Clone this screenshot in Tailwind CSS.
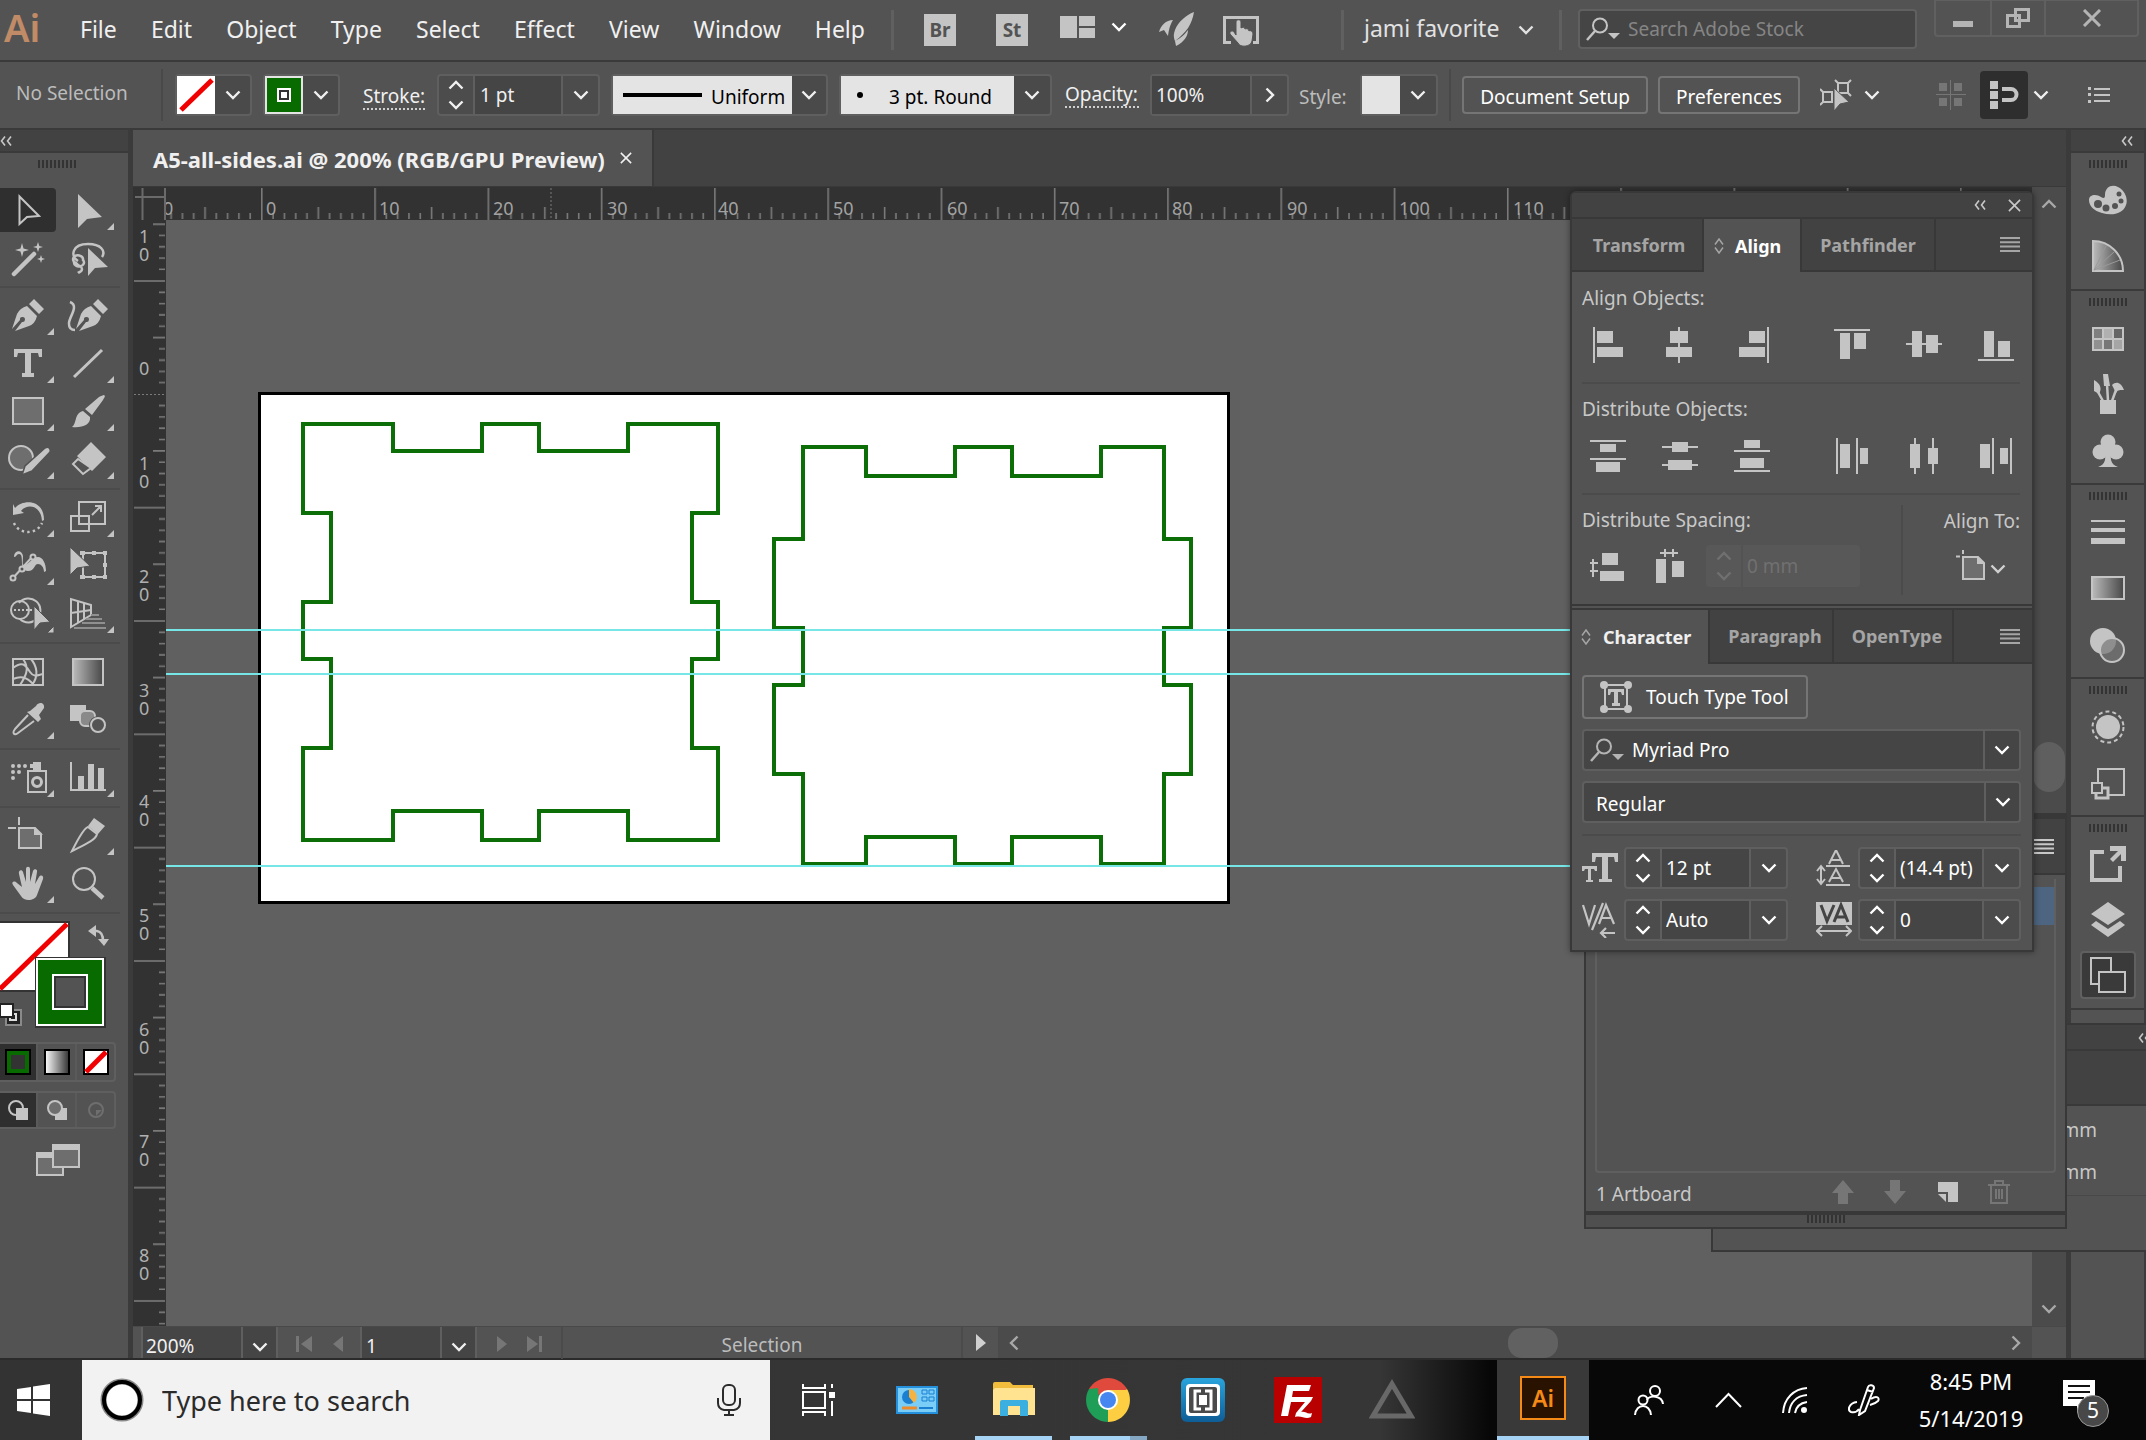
<!DOCTYPE html>
<html lang="en">
<head>
<meta charset="utf-8">
<title>A5-all-sides.ai - Adobe Illustrator</title>
<script src="https://cdn.jsdelivr.net/npm/@tailwindcss/browser@4"></script>
</head>
<body class="h-screen overflow-hidden flex flex-col bg-[#535353] font-['Noto_Sans',sans-serif] text-[19px] leading-6 text-[#c8c8c8]">

<svg class="absolute w-0 h-0" aria-hidden="true">
  <defs>
    <symbol id="chev" viewBox="0 0 16 10"><path d="M1.500 1.500L8 8l6.500-6.500" fill="none" stroke="currentColor" stroke-width="2.400"/></symbol>
    <symbol id="dbl" viewBox="0 0 12 10"><path d="M5 .5L1.500 5 5 9.500M11 .5L7.500 5l3.500 4.500" fill="none" stroke="currentColor" stroke-width="1.600"/></symbol>
    <symbol id="cross" viewBox="0 0 14 14"><path d="M1 1l12 12M13 1L1 13" fill="none" stroke="currentColor" stroke-width="1.800"/></symbol>
    <symbol id="burger" viewBox="0 0 20 15"><path d="M0 1h20M0 5.300h20M0 9.600h20M0 14h20" stroke="currentColor" stroke-width="2"/></symbol>
    <symbol id="grip" viewBox="0 0 38 8"><path d="M1 0v8M5 0v8M9 0v8M13 0v8M17 0v8M21 0v8M25 0v8M29 0v8M33 0v8M37 0v8" stroke="#333" stroke-width="2"/></symbol>
    <symbol id="updown" viewBox="0 0 10 16"><path d="M1 6.500L5 1l4 5.500M1 9.500L5 15l4-5.500" fill="none" stroke="currentColor" stroke-width="1.500"/></symbol>
    <symbol id="lens" viewBox="0 0 34 24"><circle cx="14" cy="8.500" r="7" fill="none" stroke="currentColor" stroke-width="2"/><path d="M9 14L1 23" stroke="currentColor" stroke-width="2.500"/><path d="M22 16h12l-6 6z" fill="currentColor"/></symbol>
    <linearGradient id="gr"><stop offset="0" stop-color="#bbb"/><stop offset="1" stop-color="#474747"/></linearGradient>
    <linearGradient id="wg"><stop offset="0" stop-color="#fff"/><stop offset="1" stop-color="#333"/></linearGradient>
    <linearGradient id="blu" x2="0" y2="1"><stop offset="0" stop-color="#2aa4dc"/><stop offset="1" stop-color="#0e5d96"/></linearGradient>
  </defs>
</svg>

<!-- Menu bar -->
<header class="h-[62px] shrink-0 border-b-2 border-[#3a3a3a] flex items-start pl-1 pr-[7px]">
  <span class="w-[76px] h-[54px] flex items-center text-[38px] font-semibold leading-none text-[#c08b66]">Ai</span>
  <nav aria-label="Main menu" class="w-[785px] h-[58px] flex items-center justify-between text-[23px] text-[#f0f0f0]">
    <a href="#">File</a><a href="#">Edit</a><a href="#">Object</a><a href="#">Type</a><a href="#">Select</a><a href="#">Effect</a><a href="#">View</a><a href="#">Window</a><a href="#">Help</a>
  </nav>
  <i class="ml-[26px] mt-[10px] w-[3px] h-10 bg-[#606060]"></i>
  <button class="ml-[30px] mt-[14px] w-8 h-8 bg-[#c4c4c4] text-[#535353] text-[19px] font-bold leading-8">Br</button>
  <button class="ml-10 mt-[14px] w-8 h-8 bg-[#c4c4c4] text-[#535353] text-[19px] font-bold leading-8">St</button>
  <button aria-label="Arrange documents" class="ml-8 mt-4 flex gap-4 text-white"><svg class="w-[35px] h-[22px]" fill="#c4c4c4"><path d="M0 0h17v22H0zM19 0h16v10H19zM19 12h16v10H19z"/></svg><svg class="w-4 h-[10px] mt-[6px]"><use href="#chev"/></svg></button>
  <button aria-label="GPU performance" class="ml-8 mt-3"><svg class="w-9 h-[34px]" fill="#c4c4c4"><path d="M35 0C33 12 28 20 16 29c-2-5-1-8 0-11C19 10 27 3 35 0zM14 8C7 8 2 13 0 20l5-2 4 6c1-7 2-11 5-16zM29 18c0 6-4 12-12 16l-1-5c6-3 9-6 13-11z"/></svg></button>
  <button aria-label="Touch workspace" class="ml-7 mt-4"><svg class="w-9 h-[31px]"><path d="M8 26.500H1.500v-25h33v25H30" fill="none" stroke="#c4c4c4" stroke-width="3"/><path d="M13 6c0-3 5-3 5 0v6c1-1 4-1 4 1 1-1 4 0 4 2 1-1 4 0 4 3l-1 7c-1 6-12 7-14 2L7 18c-1-3 3-4 4-2l2 3z" fill="#c4c4c4" stroke="#535353"/></svg></button>
  <i class="ml-[82px] mt-[10px] w-[3px] h-10 bg-[#606060]"></i>
  <button class="ml-5 w-[170px] h-[56px] flex items-center justify-between text-[23px] text-[#e2e2e2]">jami favorite<svg class="w-4 h-[10px] mt-1"><use href="#chev"/></svg></button>
  <i class="ml-[25px] mt-[10px] w-[3px] h-10 bg-[#606060]"></i>
  <label class="ml-auto mt-[9px] w-[339px] h-10 flex items-center pl-[6px] gap-2 rounded border-2 border-[#606060] bg-[#454545]"><svg class="w-[34px] h-6 text-[#c4c4c4]"><use href="#lens"/></svg><input aria-label="Search Adobe Stock" placeholder="Search Adobe Stock" class="flex-1 min-w-0 bg-transparent placeholder:text-[#858585]"></label>
  <div class="ml-[17px] w-[205px] h-[38px] -mt-px flex rounded-b border-2 border-[#606060] text-[#b4b4b4]">
    <button aria-label="Minimize" class="w-[56px] border-r-2 border-[#606060] flex items-center justify-center"><svg class="w-5 h-[6px] mt-3"><path d="M0 0h20v6H0z" fill="currentColor"/></svg></button>
    <button aria-label="Restore" class="w-[54px] border-r-2 border-[#606060] flex items-center justify-center"><svg class="w-6 h-5" fill="none" stroke="currentColor" stroke-width="3"><path d="M9.500 1.500h13v11h-13zM1.500 7.500h12v11h-12z"/></svg></button>
    <button aria-label="Close" class="flex-1 flex items-center justify-center"><svg class="w-5 h-[18px]"><path d="M2 1l16 16M18 1L2 17" stroke="currentColor" stroke-width="3"/></svg></button>
  </div>
</header>

<!-- Control bar -->
<section aria-label="Control" class="h-[68px] shrink-0 border-b-2 border-[#3a3a3a] flex items-center pl-4 pr-9 text-[#f0f0f0]">
  <span class="w-[147px] h-[52px] flex items-center pb-1 border-r-2 border-[#494949] text-[#bcbcbc]">No Selection</span>
  <button aria-label="Fill" class="ml-3 w-[77px] h-[42px] flex rounded border-2 border-[#5f5f5f] bg-[#4a4a4a]"><svg class="w-[38px] h-[38px] bg-white"><path d="M4 34L35 4" stroke="#f00000" stroke-width="5"/></svg><svg class="w-4 h-[10px] m-auto"><use href="#chev"/></svg></button>
  <button aria-label="Stroke color" class="ml-[11px] w-[77px] h-[42px] flex rounded border-2 border-[#5f5f5f] bg-[#4a4a4a]"><svg class="w-[38px] h-[38px]"><path fill="#e4e4e4" d="M0 0h38v38H0z"/><path fill="#076b00" d="M2 2h34v34H2z"/><path fill="#fff" d="M12 12h14v14H12z"/><path fill="#333" d="M14 14h10v10H14z"/><path fill="#fff" d="M16 16h6v6h-6z"/></svg><svg class="w-4 h-[10px] m-auto"><use href="#chev"/></svg></button>
  <label for="sw" class="ml-[23px] mt-1 w-[62px] border-b-2 border-dotted border-[#d0d0d0]">Stroke:</label>
  <div class="ml-[12px] w-[163px] h-[42px] flex rounded border-2 border-[#5f5f5f] bg-[#4c4c4c]">
    <button aria-label="Step" class="w-[34px] flex flex-col items-center justify-between py-1"><svg class="w-4 h-[10px] rotate-180"><use href="#chev"/></svg><svg class="w-4 h-[10px]"><use href="#chev"/></svg></button>
    <input id="sw" value="1 pt" class="flex-1 min-w-0 pl-[5px] bg-[#454545] border-x-2 border-[#5f5f5f]">
    <button aria-label="Stroke weights" class="w-[35px] flex"><svg class="w-4 h-[10px] m-auto"><use href="#chev"/></svg></button>
  </div>
  <div class="ml-[11px] w-[217px] h-[42px] flex items-center rounded border-2 border-[#5f5f5f] bg-[#4a4a4a]"><span class="h-full pl-[10px] flex items-center bg-[#e4e4e4]"><i class="w-[79px] h-1 bg-black"></i></span><select aria-label="Width profile" class="appearance-none w-[90px] pl-[9px] pt-1 h-full bg-[#e4e4e4] text-black"><option>Uniform</option></select><svg class="w-4 h-[10px] m-auto"><use href="#chev"/></svg></div>
  <div class="ml-[11px] w-[213px] h-[42px] flex items-center rounded border-2 border-[#5f5f5f] bg-[#4a4a4a]"><span class="w-[48px] h-full pl-4 flex items-center bg-[#e4e4e4]"><i class="w-[6px] h-[6px] rounded-full bg-black"></i></span><select aria-label="Brush" class="appearance-none w-[125px] pt-1 h-full bg-[#e4e4e4] text-black"><option>3 pt. Round</option></select><svg class="w-4 h-[10px] m-auto"><use href="#chev"/></svg></div>
  <label for="op" class="ml-[13px] w-[74px] border-b-2 border-dotted border-[#d0d0d0]">Opacity:</label>
  <div class="ml-[11px] w-[139px] h-[42px] flex rounded border-2 border-[#5f5f5f] bg-[#4c4c4c]"><input id="op" value="100%" class="flex-1 min-w-0 pl-1 bg-[#454545] border-r-2 border-[#5f5f5f]"><button aria-label="Opacity slider" class="w-[35px] flex"><svg class="w-4 h-[10px] m-auto -rotate-90"><use href="#chev"/></svg></button></div>
  <span class="ml-[10px] mt-1 w-[61px] text-[#bcbcbc]">Style:</span>
  <button aria-label="Graphic style" class="w-[78px] h-[42px] flex rounded border-2 border-[#5f5f5f] bg-[#4a4a4a]"><i class="w-[38px] h-full bg-[#e4e4e4]"></i><svg class="w-4 h-[10px] m-auto"><use href="#chev"/></svg></button>
  <i class="ml-[11px] w-[2px] h-[52px] bg-[#494949]"></i>
  <button class="ml-[11px] w-[186px] h-[38px] pt-1 rounded border-2 border-[#757575] text-white">Document Setup</button>
  <button class="ml-[10px] w-[142px] h-[38px] pt-1 rounded border-2 border-[#757575] text-white">Preferences</button>
  <button aria-label="Isolate selected" class="ml-5 flex items-center gap-3"><svg class="w-8 h-8" fill="none" stroke="#c4c4c4" stroke-width="2"><path d="M18 4h10v10H18zM15 1l3 3M31 1l-3 3M31 17l-3-3M3 13h9v10H3zM0 10l3 3M0 26l3-3"/><path d="M14 9v23l6-7 9-2z" fill="#c4c4c4" stroke="#535353" stroke-width="1"/></svg><svg class="w-4 h-[10px]"><use href="#chev"/></svg></button>
  <div class="ml-auto flex items-center">
    <svg class="w-[30px] h-[30px] mr-[14px]" fill="#767676"><path d="M3 3h8v8H3zM18 3h8v8h-8zM3 18h8v8H3zM18 18h8v8h-8zM14 0h1v30h-1zM0 14h30v1H0z"/></svg>
    <button aria-label="Snap to glyph" class="w-12 h-12 rounded bg-[#2e2e2e] flex items-center justify-center"><svg class="w-[30px] h-[30px]"><path d="M1 1h8v8H1zM1 11h8v8H1zM1 21h8v8H1z" fill="#c4c4c4"/><path d="M13 9h9a5.500 5.500 0 0 1 0 11h-9" fill="none" stroke="#c4c4c4" stroke-width="4"/></svg></button>
    <svg class="w-4 h-[10px] ml-[5px] mr-[39px]"><use href="#chev"/></svg>
    <button aria-label="Control menu"><svg class="w-[22px] h-4" fill="#c4c4c4"><path d="M0 0h3v3H0zM0 6h3v3H0zM0 13h3v3H0zM6 1h16v2H6zM6 7h16v2H6zM6 13h16v2H6z"/></svg></button>
  </div>
</section>

<main class="relative flex-1 min-h-0 flex">
  <!-- Tools -->
  <aside aria-label="Tools" class="w-[133px] shrink-0 border-r-[5px] border-[#3b3b3b] flex flex-col">
    <div class="h-[23px] bg-[#424242] border-b-2 border-[#3a3a3a] pt-[6px]"><svg class="w-3 h-[10px]"><use href="#dbl"/></svg></div>
    <svg class="w-[38px] h-2 ml-[38px] mt-[7px] mb-[19px]"><use href="#grip"/></svg>
    <div class="grid grid-cols-[56px_64px] w-[120px] justify-items-center pb-[3px] border-b-2 border-[#4b4b4b]">
      <button aria-label="Selection" class="relative"><i class="absolute inset-x-0 top-[1px] h-11 rounded-r bg-[#2f2f2f]"></i><svg class="relative w-14 h-12" viewBox="-28 -24 56 48"><path d="M-8.500-14.500V13L-1 6l12-1z" fill="none" stroke="#c4c4c4" stroke-width="2"/></svg></button>
      <button aria-label="Direct selection"><svg class="w-14 h-12" viewBox="-28 -24 56 48" fill="#c4c4c4"><path d="M-10-17V17L-1 8 14 6zM26 12v7h-7z"/></svg></button>
      <button aria-label="Magic wand"><svg class="w-14 h-12" viewBox="-28 -24 56 48" fill="#c4c4c4"><path d="M-14 15L6-5" stroke="#c4c4c4" stroke-width="4.500" stroke-linecap="round"/><path d="M-6-16l1.500 5.500L1-9l-5.500 1.500L-6-2l-1.500-5.500L-13-9l5.500-1.500zM10-17l1.300 4L15-12l-3.700 1L10-7l-1.300-4L5-12l3.700-1zM13-4l1 3 3 1-3 1-1 3-1-3-3-1 3-1z"/></svg></button>
      <button aria-label="Lasso"><svg class="w-14 h-12" viewBox="-28 -24 56 48"><path d="M-10 2C-18-3-16-15 0-15c13 0 18 7 14 13M-14 3a5 4 0 1 0 9-2 5 4 0 1 0-7 3c3 4 6 3 6 6s-3 3-4 4" fill="none" stroke="#c4c4c4" stroke-width="2.500"/><path d="M0-11V17L7 9 20 8z" fill="#c4c4c4"/></svg></button>
    </div>
    <div class="grid grid-cols-[56px_64px] w-[120px] justify-items-center pt-1 pb-1 border-b-2 border-[#4b4b4b]">
      <button aria-label="Pen"><svg class="w-14 h-12" viewBox="-28 -24 56 48" fill="#c4c4c4"><path d="M-16 13L-11-2Q-8-8-1-10L9 0Q7 8 1 10L-13 15-6 6A2.500 2.500 0 1 0-8 4zM6-17L16-7 11-2 1-12zM26 12v7h-7z"/></svg></button>
      <button aria-label="Curvature"><svg class="w-14 h-12" viewBox="-28 -24 56 48" fill="#c4c4c4"><path d="M-18-14C-8-10-20 2-19 8c0 5 3 6 6 6" fill="none" stroke="#c4c4c4" stroke-width="2.500"/><path d="M-12 13L-7-2Q-4-8 3-10L13 0Q11 8 5 10L-9 15-2 6A2.500 2.500 0 1 0-4 4zM10-17L20-7 15-2 5-12z"/></svg></button>
      <button aria-label="Type"><svg class="w-14 h-12" viewBox="-28 -24 56 48" fill="#c4c4c4"><path d="M-14-15H14V-7H11L10-11H3V9H6V13H-6V9H-3V-11H-10L-11-7H-14zM26 12v7h-7z"/></svg></button>
      <button aria-label="Line segment"><svg class="w-14 h-12" viewBox="-28 -24 56 48" fill="#c4c4c4"><path d="M-14 13L14-14" stroke="#c4c4c4" stroke-width="3"/><path d="M26 12v7h-7z"/></svg></button>
      <button aria-label="Rectangle"><svg class="w-14 h-12" viewBox="-28 -24 56 48" fill="#c4c4c4"><path d="M-15-14H15V12H-15z" fill="#6e6e6e" stroke="#c4c4c4" stroke-width="2"/><path d="M26 12v7h-7z"/></svg></button>
      <button aria-label="Paintbrush"><svg class="w-14 h-12" viewBox="-28 -24 56 48" fill="#c4c4c4"><path d="M16-17c2 1 0 3-1 5L4 3-3-3 11-15c2-1 4-2 5-2zM-5-1L2 5C3 13-6 16-16 15-11 12-14 1-5-1zM26 12v7h-7z"/></svg></button>
      <button aria-label="Shaper"><svg class="w-14 h-12" viewBox="-28 -24 56 48" fill="#c4c4c4"><circle cx="-7" cy="-2" r="12" fill="#6e6e6e" stroke="#c4c4c4" stroke-width="2"/><path d="M-6 15l3-9L17-12c4-2 6 1 5 4L4 11z" stroke="#535353" stroke-width="1.500"/><path d="M26 12v7h-7z"/></svg></button>
      <button aria-label="Eraser"><svg class="w-14 h-12" viewBox="-28 -24 56 48" fill="#c4c4c4"><path d="M3-18L18-3 4 11-11-4zM26 12v7h-7z"/><path d="M-10-1L3 8-5 14-15 4z" fill="#535353" stroke="#c4c4c4" stroke-width="2"/></svg></button>
    </div>
    <div class="grid grid-cols-[56px_64px] w-[120px] justify-items-center pt-1 pb-1 border-b-2 border-[#4b4b4b]">
      <button aria-label="Rotate"><svg class="w-14 h-12" viewBox="-28 -24 56 48" fill="#c4c4c4"><path d="M-15-14l2 4C-5-19 16-19 16 2l-2 1C13-14-2-14-7-7l3 2-11 2z"/><path d="M-14 5A15 14 0 0 0 14 5" fill="none" stroke="#c4c4c4" stroke-width="2.400" stroke-dasharray="2.400 3.200"/><path d="M26 12v7h-7z"/></svg></button>
      <button aria-label="Scale"><svg class="w-14 h-12" viewBox="-28 -24 56 48" fill="none" stroke="#c4c4c4" stroke-width="2"><path d="M-9-16H17V6H-9zM-17-2H1V13H-17zM4-3L13-12M7-12h6v6"/><path d="M26 12v7h-7z" fill="#c4c4c4" stroke="none"/></svg></button>
      <button aria-label="Width"><svg class="w-14 h-12" viewBox="-28 -24 56 48" fill="#c4c4c4"><path d="M-14-9c0-7 8-8 9-1 0 5-1 9 1 9 5 0 8-8 14-8 5 0 8 7 8 14l-2 1c0-5-3-8-6-8-4 0-3 7-10 7C-10 5-3-12-9-12c-3 0-2 3-5 3z"/><path d="M-15 12L5-10" stroke="#c4c4c4" stroke-width="2"/><g fill="#535353" stroke="#c4c4c4" stroke-width="2"><circle cx="-15" cy="12" r="2.500"/><circle cx="-6" cy="3" r="2.500"/><circle cx="5" cy="-9" r="2.500"/></g><path d="M26 12v7h-7z"/></svg></button>
      <button aria-label="Free transform"><svg class="w-14 h-12" viewBox="-28 -24 56 48" fill="#c4c4c4"><path d="M-5-13H17V11H-5z" fill="none" stroke="#c4c4c4" stroke-width="2"/><path d="M-8-15h5v4h-5zM4-15h4v4H4zM15-15h4v4h-4zM15-3h4v4h-4zM15 9h4v4h-4zM4 9h4v4H4zM-8 9h5v4h-5z"/><path d="M-18-19V9l7-7L2 0z" stroke="#535353"/></svg></button>
      <button aria-label="Shape builder"><svg class="w-14 h-12" viewBox="-28 -24 56 48" fill="none" stroke="#c4c4c4" stroke-width="2"><path d="M-9-11A12 12 0 1 1-8 5"/><circle cx="-8" cy="-4" r="9"/><path d="M-14-4H6" stroke-dasharray="2 2"/><path d="M6-8V16l6-7 10-1zM26 12v7h-7z" fill="#c4c4c4" stroke="#535353" stroke-width="1"/></svg></button>
      <button aria-label="Perspective grid"><svg class="w-14 h-12" viewBox="-28 -24 56 48" fill="none" stroke="#c4c4c4" stroke-width="2"><path d="M-17-15V13L3 1V-9zM-17-1L3-4M-10-13V9M-4-11V5"/><path d="M3 1h8M-2 5H14M-6 9H17M-14 14H18" stroke="#8f8f8f"/><path d="M26 12v7h-7z" fill="#c4c4c4" stroke="none"/></svg></button>
    </div>
    <div class="grid grid-cols-[56px_64px] w-[120px] justify-items-center pt-1 pb-1 border-b-2 border-[#4b4b4b]">
      <button aria-label="Mesh"><svg class="w-14 h-12" viewBox="-28 -24 56 48" fill="none" stroke="#c4c4c4" stroke-width="2"><path d="M-15-13H15V13H-15zM-15-4C-5-12-2-6 2 0s8 3 13 2M-5-13C2-4-2 4-8 13M3-13C9-6 11 4 4 13M-15 7C-8 4-2 4 6 13"/></svg></button>
      <button aria-label="Gradient"><svg class="w-14 h-12" viewBox="-28 -24 56 48"><path d="M-15-13H15V13H-15z" fill="url(#gr)" stroke="#c4c4c4" stroke-width="2"/></svg></button>
      <button aria-label="Eyedropper"><svg class="w-14 h-12" viewBox="-28 -24 56 48" fill="#c4c4c4"><path d="M2-9L8-14c3-5 9-3 8 2L11-5l2 4-3 3L-1-8z"/><path d="M0-5L-13 9c-3 4-1 7 3 4L6 1" fill="none" stroke="#c4c4c4" stroke-width="2"/><path d="M26 12v7h-7z"/></svg></button>
      <button aria-label="Blend"><svg class="w-14 h-12" viewBox="-28 -24 56 48" fill="#c4c4c4"><path d="M-18-15H-2V1H-18z"/><rect x="-8" y="-9" width="15" height="15" rx="5" fill="#8a8a8a" stroke="#c4c4c4" stroke-width="2"/><circle cx="10" cy="5" r="9" fill="#535353"/><circle cx="10" cy="5" r="7" fill="none" stroke="#c4c4c4" stroke-width="2"/></svg></button>
    </div>
    <div class="grid grid-cols-[56px_64px] w-[120px] justify-items-center pt-1 pb-1 border-b-2 border-[#4b4b4b]">
      <button aria-label="Symbol sprayer"><svg class="w-14 h-12" viewBox="-28 -24 56 48" fill="#c4c4c4"><path d="M0-7H18V14H0z" fill="none" stroke="#c4c4c4" stroke-width="2"/><path d="M5-16h8v8H5zM2-14h4v4H2z"/><circle cx="9" cy="4" r="4.500" fill="none" stroke="#c4c4c4" stroke-width="3"/><path d="M-15-12h0M-9-12h0M-3-12h0M-15-6h0M-9-6h0M-15 0h0" stroke="#c4c4c4" stroke-width="4" stroke-linecap="round"/><path d="M26 12v7h-7z"/></svg></button>
      <button aria-label="Column graph"><svg class="w-14 h-12" viewBox="-28 -24 56 48" fill="#c4c4c4"><path d="M-18-16h2V11H18v2H-18zM-10-2h6V11h-6zM0-14H6V11H0zM10-10h6V11h-6zM26 12v7h-7z"/></svg></button>
    </div>
    <div class="grid grid-cols-[56px_64px] w-[120px] justify-items-center pt-1 pb-1 border-b-2 border-[#4b4b4b]">
      <button aria-label="Artboard"><svg class="w-14 h-12" viewBox="-28 -24 56 48"><path d="M-9-8H7l6 6V12H-9z" fill="#6e6e6e" stroke="#c4c4c4" stroke-width="2"/><path d="M6-9l9 8H6z" fill="#c4c4c4"/><path d="M-9-19v8M-20-8h8" stroke="#c4c4c4" stroke-width="2"/></svg></button>
      <button aria-label="Slice"><svg class="w-14 h-12" viewBox="-28 -24 56 48" fill="#c4c4c4"><path d="M6-18L17-10 10-2 0-10z"/><path d="M0-9L9-2C8 4-4 9-16 15-10 3-4-8 0-9z" fill="none" stroke="#c4c4c4" stroke-width="2"/><path d="M26 12v7h-7z"/></svg></button>
      <button aria-label="Hand"><svg class="w-14 h-12" viewBox="-28 -24 56 48" fill="#c4c4c4"><path d="M-15 1c-2-3 1-5 4-2l5 4-3-13c-1-4 3-5 4-2l3 10V-15c0-3 4-3 4 0V-2L5-13c1-3 5-2 4 1L7 0l4-7c2-3 5-1 4 2L9 11C7 17-4 18-7 12z"/><path d="M26 12v7h-7z"/></svg></button>
      <button aria-label="Zoom"><svg class="w-14 h-12" viewBox="-28 -24 56 48" fill="none" stroke="#c4c4c4"><circle cx="-4" cy="-5" r="11" stroke-width="2"/><path d="M4 4L15 14" stroke-width="4.500"/></svg></button>
    </div>
    <button aria-label="Fill and stroke" class="mt-[7px] w-[115px] h-[108px]"><svg class="w-[115px] h-[108px]"><path d="M-2 0H70V71H-2z" fill="#333"/><path d="M-2 2H68V69H-2z" fill="#fff"/><path d="M0 68L67 3" stroke="#f00000" stroke-width="5"/><path d="M35 36h71v71H35z" fill="#333"/><path d="M37 38h66v66H37z" fill="#076b00" stroke="#fff" stroke-width="2"/><path d="M53 54h34v34H53z" fill="#535353" stroke="#fff" stroke-width="2"/><path d="M55 56h30v30H55z" fill="none" stroke="#333" stroke-width="2"/><path d="M90 10h7q6 1 6 10" fill="none" stroke="#c4c4c4" stroke-width="2.500"/><path d="M88 10l8-6v12zM98 18h11l-5 7z" fill="#c4c4c4"/><path d="M6 89h15v15H6z" fill="#222" stroke="#8a8a8a" stroke-width="2"/><path d="M10 93h6v6h-6z" fill="none" stroke="#ddd" stroke-width="2"/><path d="M0 83h13v13H0z" fill="#fff" stroke="#222" stroke-width="2"/></svg></button>
    <div class="mt-[13px] w-[116px] h-10 flex rounded-r border-2 border-l-0 border-[#5f5f5f]">
      <button aria-label="Color" class="w-9 bg-[#2f2f2f] flex items-center justify-center"><svg class="w-[26px] h-[26px]"><path fill="#000" d="M0 0h26v26H0z"/><path fill="#076b00" d="M2 2h22v22H2z"/><path fill="#333" d="M6 6h14v14H6z"/></svg></button>
      <button aria-label="Gradient fill" class="w-[41px] border-x-2 border-[#5a5a5a] flex items-center justify-center"><svg class="w-[26px] h-[26px]"><path fill="url(#wg)" stroke="#000" stroke-width="2" d="M1 1h24v24H1z"/></svg></button>
      <button aria-label="None" class="flex-1 flex items-center justify-center"><svg class="w-[26px] h-[26px]"><path fill="#fff" stroke="#000" stroke-width="2" d="M1 1h24v24H1z"/><path d="M3 23L23 3" stroke="#f00000" stroke-width="5"/></svg></button>
    </div>
    <div class="mt-[9px] w-[116px] h-[38px] flex rounded-r border-2 border-l-0 border-[#5f5f5f]">
      <button aria-label="Draw normal" class="w-9 bg-[#2f2f2f] flex items-center justify-center"><svg class="w-5 h-5"><circle cx="8" cy="8" r="7" fill="none" stroke="#c4c4c4" stroke-width="2"/><path d="M8 8h12v12H8z" fill="#c4c4c4"/></svg></button>
      <button aria-label="Draw behind" class="w-[41px] border-x-2 border-[#5a5a5a] flex items-center justify-center"><svg class="w-5 h-5"><path d="M8 8h12v12H8z" fill="#c4c4c4"/><circle cx="8" cy="8" r="7" fill="#6e6e6e" stroke="#c4c4c4" stroke-width="2"/></svg></button>
      <button aria-label="Draw inside" class="flex-1 flex items-center justify-center"><svg class="w-4 h-4"><circle cx="8" cy="8" r="7" fill="none" stroke="#6e6e6e" stroke-width="2"/><path d="M8 8h6l-6 6z" fill="#6e6e6e"/></svg></button>
    </div>
    <button aria-label="Screen mode" class="ml-9 mt-[15px] w-11"><svg class="w-11 h-8"><path d="M1 9h26v22H1z" fill="#6e6e6e" stroke="#c4c4c4" stroke-width="2"/><path d="M1 8h20v6H1zM17 1h26v6H17z" fill="#c4c4c4"/><path d="M17 3h26v20H17z" fill="#6e6e6e" stroke="#c4c4c4" stroke-width="2"/><path d="M16 0h28v6H16z" fill="#c4c4c4"/></svg></button>
  </aside>

  <!-- Document window -->
  <section aria-label="Document" class="flex-1 min-w-0 flex flex-col">
    <div class="h-[57px] shrink-0 flex bg-[#424242] border-b border-[#393939]">
      <div class="h-full w-[521px] pl-5 flex items-center gap-4 bg-[#535353] border-r-2 border-[#393939] text-[22px] font-bold text-[#f0f0f0] whitespace-nowrap"><a href="#" class="w-[451px] pt-[2px]">A5-all-sides.ai @ 200% (RGB/GPU Preview)</a><button aria-label="Close document"><svg class="w-3 h-3"><use href="#cross"/></svg></button></div>
    </div>
    <div class="flex-1 min-h-0 flex">
      <div class="flex-1 min-w-0 flex flex-col">
        <!-- Horizontal ruler: one pattern tile is ten millimetres -->
        <div class="h-[33px] shrink-0 bg-[#323232]"><svg class="w-full h-full text-[18px]" fill="#a2a2a2">
          <defs><pattern id="rh" x="128" y="0" width="113.270" height="33" patternUnits="userSpaceOnUse"><path d="M.8 1v32" stroke="#7a7a7a" stroke-width="1.600"/><path d="M12.100 26v6M23.400 26v6M34.700 26v6M46 26v6M57.300 20v12M68.600 26v6M79.900 26v6M91.200 26v6M102.500 26v6" stroke="#7a7a7a" stroke-width="1.600"/></pattern></defs>
          <rect x="33" width="100%" height="33" fill="url(#rh)"/><path d="M2 10h30M9.500 1v32M32 1v32" stroke="#6a6a6a" stroke-width="2"/><path d="M418 1v31" stroke="#7a7a7a" stroke-dasharray="2 2"/>
          <svg x="33" width="2000" height="33" class="overflow-hidden"><text x="-3" y="28">0</text></svg>
          <text x="133" y="28">0</text><text x="246" y="28">10</text><text x="360" y="28">20</text><text x="474" y="28">30</text><text x="585" y="28">40</text><text x="700" y="28">50</text><text x="814" y="28">60</text><text x="926" y="28">70</text><text x="1039" y="28">80</text><text x="1154" y="28">90</text><text x="1266" y="28">100</text><text x="1380" y="28">110</text>
        </svg></div>
        <div class="flex-1 min-h-0 flex">
          <div class="w-[33px] shrink-0 bg-[#323232]"><svg class="w-full h-full text-[18px]" fill="#b0b0b0">
            <defs><pattern id="rv" x="0" y="60" width="33" height="113.330" patternUnits="userSpaceOnUse"><path d="M1 1h31" stroke="#7a7a7a" stroke-width="1.600"/><path d="M26 12.300h6M26 23.600h6M26 34.900h6M26 46.200h6M20 57.500h12M26 68.800h6M26 80.100h6M26 91.400h6M26 102.700h6" stroke="#7a7a7a" stroke-width="1.600"/></pattern></defs>
            <rect width="33" height="100%" fill="url(#rv)"/>
            <path d="M0 174.500h33" stroke="#323232" stroke-width="4"/><path d="M1 174.500h31" stroke="#7a7a7a" stroke-dasharray="2 2"/>
            <text x="6" y="23">1<tspan x="6" dy="18">0</tspan></text><text x="6" y="155">0</text><text x="6" y="250">1<tspan x="6" dy="18">0</tspan></text><text x="6" y="363">2<tspan x="6" dy="18">0</tspan></text><text x="6" y="477">3<tspan x="6" dy="18">0</tspan></text><text x="6" y="588">4<tspan x="6" dy="18">0</tspan></text><text x="6" y="702">5<tspan x="6" dy="18">0</tspan></text><text x="6" y="816">6<tspan x="6" dy="18">0</tspan></text><text x="6" y="928">7<tspan x="6" dy="18">0</tspan></text><text x="6" y="1042">8<tspan x="6" dy="18">0</tspan></text>
          </svg></div>
          <div class="flex-1 min-w-0 bg-[#606060]"><svg class="w-full h-full"><g transform="translate(-166 -220)">
            <path d="M259.500 393.500h969v509h-969z" fill="#fff" stroke="#000" stroke-width="3"/>
            <g fill="none" stroke="#0b6e06" stroke-width="4">
              <path d="M303 424H393V451H482V424H539V451H628V424H718V513H692V602H718V659H692V748H718V840H628V811H539V840H482V811H393V840H303V748H331V659H303V602H331V513H303z"/>
              <path d="M803 447H866V476H955V447H1012V476H1101V447H1164V539H1191V628H1164V685H1191V774H1164V864H1101V837H1012V864H955V837H866V864H803V774H774V685H803V628H774V539H803z"/>
            </g>
            <path d="M166 630H2032M166 674H2032M166 866H2032" stroke="#76e7e6" stroke-width="2"/>
          </g></svg></div>
        </div>
      </div>
      <div class="w-[34px] shrink-0 bg-[#4b4b4b] flex flex-col items-center text-[#a8a8a8]">
        <svg class="w-4 h-[10px] mt-3 rotate-180"><use href="#chev"/></svg>
        <i class="mt-[533px] w-8 h-[50px] rounded-full bg-[#5f5f5f]"></i>
        <svg class="w-4 h-[10px] mt-auto mb-3"><use href="#chev"/></svg>
      </div>
    </div>
    <!-- Status bar -->
    <div class="h-8 shrink-0 border-t border-[#494949] flex text-[#f0f0f0]">
      <label class="ml-2 w-[137px] h-full flex bg-[#454545] border-x-2 border-[#5f5f5f]"><input aria-label="Zoom level" value="200%" class="w-[100px] pl-[3px] pt-[6px] bg-transparent border-r-2 border-[#5f5f5f]"><svg class="w-4 h-[10px] mt-[15px] mx-auto"><use href="#chev"/></svg></label>
      <svg class="w-[82px] h-8 text-[#767676]" fill="currentColor"><path d="M18 9h3v16h-3zM34 9v16l-11-8zM65 9v16l-10-8z"/></svg>
      <label class="w-[117px] h-full flex bg-[#454545] border-x-2 border-[#5f5f5f]"><input aria-label="Artboard number" value="1" class="w-[80px] pl-1 pt-[6px] bg-transparent border-r-2 border-[#5f5f5f]"><svg class="w-4 h-[10px] mt-[15px] mx-auto"><use href="#chev"/></svg></label>
      <svg class="w-[86px] h-8 text-[#767676]" fill="currentColor"><path d="M20 9v16l10-8zM50 9v16l11-8zM62 9h3v16h-3z"/><path fill="#4b4b4b" d="M84 0h2v32h-2z"/></svg>
      <span class="w-[400px] pt-[6px] text-center border-r-2 border-[#4b4b4b] text-[#bcbcbc]">Selection</span>
      <button aria-label="Status menu" class="w-[35px] flex justify-center"><svg class="w-[10px] h-[18px] mt-[7px]"><path d="M0 0v17l10-8z" fill="#d0d0d0"/></svg></button>
      <div class="flex-1 flex items-center justify-between bg-[#4b4b4b] px-2 text-[#a8a8a8]"><svg class="w-4 h-[10px] rotate-90"><use href="#chev"/></svg><i class="ml-[486px] w-[50px] h-[30px] rounded-[14px] bg-[#616161]"></i><svg class="w-4 h-[10px] ml-auto -rotate-90"><use href="#chev"/></svg></div>
      <i class="w-[34px]"></i>
    </div>
  </section>

  <!-- Collapsed panel dock -->
  <aside aria-label="Panels" class="w-20 shrink-0 border-l-[5px] border-r-2 border-[#3b3b3b] flex flex-col items-center">
    <div class="w-full h-[23px] bg-[#424242] border-b-2 border-[#3a3a3a] flex justify-end pt-[6px] pr-[11px]"><svg class="w-3 h-[10px]"><use href="#dbl"/></svg></div>
    <div class="w-full h-[138px] flex flex-col items-center pt-[7px] border-b-2 border-[#3a3a3a]"><svg class="w-[38px] h-2"><use href="#grip"/></svg>
      <button aria-label="Color"><svg class="w-10 h-[30px] mt-[17px]"><path d="M17 10C17 2 24-1 30 2c8 4 10 13 8 18-3 9-14 11-24 8C6 26 1 21 1 15 1 9 9 9 13 12c3 2 4 1 4-2z" fill="#c4c4c4"/><g fill="#535353"><circle cx="10" cy="19" r="4"/><circle cx="18" cy="23" r="3.500"/><circle cx="27" cy="21" r="3"/><circle cx="33" cy="16" r="2.500"/><circle cx="31" cy="9" r="2.500"/></g></svg></button>
      <button aria-label="Color guide"><svg class="w-8 h-8 mt-[25px]"><path d="M1 1A30 30 0 0 1 31 31H1z" fill="url(#gr)" stroke="#c4c4c4" stroke-width="2"/><path d="M2 30L14 6M2 30L22 12M2 30L28 20" stroke="#999"/></svg></button></div>
    <div class="w-full h-[194px] flex flex-col items-center pt-[7px] border-b-2 border-[#3a3a3a]"><svg class="w-[38px] h-2"><use href="#grip"/></svg>
      <button aria-label="Swatches"><svg class="w-8 h-6 mt-[21px]"><path fill="#c4c4c4" d="M0 0h32v24H0z"/><path fill="#7f7f7f" d="M2 2h8v9H2z"/><path fill="#b0b0b0" d="M12 2h8v9h-8z"/><path fill="#666" d="M22 2h8v9h-8z"/><path fill="#909090" d="M2 13h8v9H2z"/><path fill="#777" d="M12 13h8v9h-8z"/><path fill="#a5a5a5" d="M22 13h8v9h-8z"/></svg></button>
      <button aria-label="Brushes"><svg class="w-8 h-10 mt-[23px]" fill="#c4c4c4"><path d="M8 26h16v14H8zM11 0h5l2 12h-6zM2 6c7 4 8 9 5 14L2 17zM20 11c4-4 9-3 12 5-6 0-6 0-8 3z"/><path d="M6 18l5 9M15 10l1 17M24 16l-4 11" stroke="#c4c4c4" stroke-width="2.500"/></svg></button>
      <button aria-label="Symbols"><svg class="w-8 h-[34px] mt-5" fill="#c4c4c4"><circle cx="16" cy="8" r="7.500"/><circle cx="8" cy="18" r="7.500"/><circle cx="24" cy="18" r="7.500"/><path d="M14 12h4l1 14c1 4 4 6 7 7H6c3-1 6-3 7-7z"/></svg></button></div>
    <div class="w-full h-[194px] flex flex-col items-center pt-[7px] border-b-2 border-[#3a3a3a]"><svg class="w-[38px] h-2"><use href="#grip"/></svg>
      <button aria-label="Stroke"><svg class="w-[34px] h-[25px] mt-[20px]" fill="#c4c4c4"><path d="M0 0h34v2H0zM0 8h34v4H0zM0 18h34v6H0z"/></svg></button>
      <button aria-label="Gradient"><svg class="w-[34px] h-6 mt-[31px]"><path d="M1 1h32v22H1z" fill="url(#gr)" stroke="#c4c4c4" stroke-width="2"/></svg></button>
      <button aria-label="Transparency"><svg class="w-9 h-9 mt-7"><circle cx="13" cy="13" r="13" fill="#c4c4c4"/><circle cx="22" cy="22" r="12" fill="#777" fill-opacity=".7" stroke="#c4c4c4" stroke-width="2"/></svg></button></div>
    <div class="w-full h-[138px] flex flex-col items-center pt-[7px] border-b-2 border-[#3a3a3a]"><svg class="w-[38px] h-2"><use href="#grip"/></svg>
      <button aria-label="Appearance"><svg class="w-[34px] h-[34px] mt-[16px]"><circle cx="17" cy="17" r="12" fill="#c4c4c4"/><circle cx="17" cy="17" r="15.500" fill="none" stroke="#c4c4c4" stroke-width="2" stroke-dasharray="4 3"/></svg></button>
      <button aria-label="Graphic styles"><svg class="w-[34px] h-8 mt-6" fill="none" stroke="#c4c4c4" stroke-width="2"><path d="M7 14V1h26v26H17"/><path d="M5 20h12v10H5z" stroke-width="3"/><path d="M1 15h10v10H1z" fill="#535353"/></svg></button></div>
    <div class="w-full h-[193px] flex flex-col items-center pt-[7px] border-b-2 border-[#3a3a3a]"><svg class="w-[38px] h-2"><use href="#grip"/></svg>
      <button aria-label="Asset export"><svg class="w-9 h-9 mt-[14px]"><path d="M14 6H2v28h28V20" fill="none" stroke="#c4c4c4" stroke-width="4"/><path d="M20 0h16v15h-5V8L23 16l-3-3 8-8h-8z" fill="#c4c4c4"/></svg></button>
      <button aria-label="Layers"><svg class="w-[34px] h-9 mt-5" fill="#c4c4c4"><path d="M17 0L34 12 17 23 0 12zM5 19l12 8 12-8 5 4-17 12L0 23z"/></svg></button>
      <button aria-label="Artboards" class="mt-[13px] w-[56px] h-12 rounded border-2 border-[#606060] bg-[#3a3a3a] flex items-center justify-center"><svg class="w-9 h-9" fill="none" stroke="#c4c4c4" stroke-width="2"><path d="M9 27H1V1h20v13M9 15h26v20H9z"/></svg></button></div>
  </aside>

  <!-- Properties panel, reaching past the window edge -->
  <section aria-label="Properties" class="absolute right-0 top-[893px] w-[435px] h-[229px] bg-[#535353] border-l-2 border-y-2 border-[#383838] flex flex-col items-end">
    <div class="w-full h-[26px] bg-[#424242] border-b-2 border-[#393939] flex justify-end pt-2"><svg class="w-3 h-[10px] -mr-1"><use href="#dbl"/></svg></div>
    <div class="w-full h-[55px] bg-[#424242] border-b-2 border-[#393939]"></div>
    <span class="mt-3 mr-[49px]">mm</span>
    <span class="mt-[18px] mr-[49px]">mm</span>
    <i class="w-full mt-[11px] h-px bg-[#484848]"></i>
  </section>

  <!-- Artboards panel -->
  <section aria-label="Artboards" class="absolute right-[79px] top-[683px] w-[483px] h-[416px] bg-[#535353] border-2 border-[#383838] flex flex-col">
    <div class="h-[60px] shrink-0 bg-[#424242] border-t-4 border-b-2 border-[#383838] flex items-center justify-end pr-[11px]"><svg class="w-5 h-[15px]"><use href="#burger"/></svg></div>
    <div class="mx-[9px] mt-1 h-[294px] shrink-0 border-2 border-t-0 border-[#5f5f5f] rounded-b pt-2"><div class="h-[38px] bg-[#4d6580]"></div></div>
    <div class="h-[38px] shrink-0 flex items-center pl-[10px] pr-[55px]">
      <span class="mt-1 mr-auto">1 Artboard</span>
      <button aria-label="Move up"><svg class="w-[22px] h-6" fill="#767676"><path d="M11 0l11 13h-6v11H6V13H0z"/></svg></button>
      <button aria-label="Move down" class="ml-[30px]"><svg class="w-[22px] h-6" fill="#767676"><path d="M11 24l11-13h-6V0H6v11H0z"/></svg></button>
      <button aria-label="New artboard" class="ml-8"><svg class="w-5 h-5" fill="#c4c4c4"><path d="M0 0h20v20H10V10H0zM0 12h8v8z"/></svg></button>
      <button aria-label="Delete artboard" class="ml-[30px]"><svg class="w-[22px] h-6" fill="none" stroke="#767676" stroke-width="2"><path d="M0 5h22M3 5v18h16V5M7 4V1h8v3M8 9v10M11 9v10M14 9v10"/></svg></button>
    </div>
    <div class="flex-1 bg-[#4f4f4f] border-t-4 border-[#383838] flex justify-center"><svg class="w-[38px] h-2"><use href="#grip"/></svg></div>
  </section>

  <!-- Align and Character panels -->
  <div class="absolute right-[112px] top-[61px] w-[464px] rounded-t-md bg-[#535353] border-2 border-[#383838] flex flex-col shadow-[0_0_6px_#00000066]">
    <section aria-label="Align">
      <div class="h-[26px] rounded-t bg-[#424242] border-b-2 border-[#383838] flex items-center justify-end gap-[22px] pr-[11px]"><svg class="w-3 h-[10px]"><use href="#dbl"/></svg><svg class="w-[13px] h-[13px]"><use href="#cross"/></svg></div>
      <div role="tablist" class="h-[53px] flex bg-[#424242] text-[18px] font-bold text-[#a5a5a5]">
        <button role="tab" class="w-[132px] pl-1 border-r-2 border-b-2 border-[#383838]">Transform</button>
        <button role="tab" class="w-[96px] flex items-center pl-[10px] gap-[11px] bg-[#535353] text-white"><svg class="w-[10px] h-4 text-[#a5a5a5]"><use href="#updown"/></svg>Align</button>
        <button role="tab" class="w-[136px] border-x-2 border-b-2 border-[#383838]">Pathfinder</button>
        <button aria-label="Panel menu" class="flex-1 border-b-2 border-[#383838] flex items-center justify-end pr-3"><svg class="w-5 h-[15px]"><use href="#burger"/></svg></button>
      </div>
      <div class="pl-[10px] pr-3 pt-[14px]">
        <h2>Align Objects:</h2>
        <div class="mt-[17px] pl-2 flex gap-9 text-[#c4c4c4]">
          <button aria-label="Align left"><svg class="w-9 h-9" fill="currentColor"><path d="M3 0h2v36H3zM7 4h16v12H7zM7 20h26v10H7z"/></svg></button>
          <button aria-label="Align center"><svg class="w-9 h-9" fill="currentColor"><path d="M16 0h2v36h-2zM8 4h18v12H8zM4 20h26v10H4z"/></svg></button>
          <button aria-label="Align right" class="mr-7"><svg class="w-9 h-9" fill="currentColor"><path d="M33 0h2v36h-2zM15 4h16v12H15zM5 20h26v10H5z"/></svg></button>
          <button aria-label="Align top"><svg class="w-9 h-9" fill="currentColor"><path d="M0 2h36v2H0zM6 6h10v26H6zM20 6h12v16H20z"/></svg></button>
          <button aria-label="Align middle"><svg class="w-9 h-9" fill="currentColor"><path d="M0 16h36v2H0zM6 4h10v26H6zM20 8h12v18H20z"/></svg></button>
          <button aria-label="Align bottom"><svg class="w-9 h-9" fill="currentColor"><path d="M0 32h36v2H0zM6 4h10v26H6zM20 14h12v16H20z"/></svg></button>
        </div>
        <div class="mt-[19px] pt-[13px] border-t-2 border-[#4b4b4b]"><h2>Distribute Objects:</h2></div>
        <div class="mt-[17px] pl-2 flex gap-9 text-[#c4c4c4]">
          <button aria-label="Distribute top"><svg class="w-9 h-9" fill="currentColor"><path d="M0 2h36v2H0zM10 6h16v8H10zM0 20h36v2H0zM6 24h24v10H6z"/></svg></button>
          <button aria-label="Distribute vertical center"><svg class="w-9 h-9" fill="currentColor"><path d="M0 8h36v2H0zM10 4h16v10H10zM0 26h36v2H0zM6 22h24v10H6z"/></svg></button>
          <button aria-label="Distribute bottom" class="mr-7"><svg class="w-9 h-9" fill="currentColor"><path d="M10 2h16v8H10zM0 12h36v2H0zM6 20h24v10H6zM0 32h36v2H0z"/></svg></button>
          <button aria-label="Distribute left"><svg class="w-9 h-9" fill="currentColor"><path d="M2 0h2v36H2zM6 6h10v24H6zM22 0h2v36h-2zM26 10h8v16h-8z"/></svg></button>
          <button aria-label="Distribute horizontal center"><svg class="w-9 h-9" fill="currentColor"><path d="M8 0h2v36H8zM4 6h10v24H4zM26 0h2v36h-2zM22 10h10v16H22z"/></svg></button>
          <button aria-label="Distribute right"><svg class="w-9 h-9" fill="currentColor"><path d="M2 6h10v24H2zM14 0h2v36h-2zM22 10h8v16h-8zM32 0h2v36h-2z"/></svg></button>
        </div>
        <div class="mt-[19px] pt-[10px] pb-[9px] h-[111px] border-t-2 border-[#4b4b4b] flex">
          <div class="w-[321px] border-r-2 border-[#4b4b4b]"><h2 class="pt-[3px]">Distribute Spacing:</h2>
            <div class="mt-[13px] pl-2 flex items-start text-[#c4c4c4]">
              <button aria-label="Vertical distribute space" class="mt-1"><svg class="w-9 h-9" fill="currentColor"><path d="M12 4h16v12H12zM10 22h24v10H10zM2 10h2v18H2zM0 13h8v2H0zM0 21h8v2H0z"/></svg></button>
              <button aria-label="Horizontal distribute space" class="mt-1 ml-[30px]"><svg class="w-9 h-9" fill="currentColor"><path d="M0 10h10v24H0zM16 12h12v16H16zM4 3h18v2H4zM8 0h2v8H8zM16 0h2v8h-2z"/></svg></button>
              <div class="ml-[14px] w-[154px] h-[42px] flex bg-[#585858] text-[#707070] rounded"><span class="w-[37px] flex flex-col items-center justify-between py-[6px] border-r-2 border-[#535353]"><svg class="w-4 h-[10px] rotate-180"><use href="#chev"/></svg><svg class="w-4 h-[10px]"><use href="#chev"/></svg></span><input aria-label="Spacing" disabled value="0 mm" class="w-[110px] pl-1 bg-transparent"></div>
            </div></div>
          <div class="flex-1 flex flex-col items-end"><span class="pt-1">Align To:</span><button aria-label="Align to artboard" class="mt-[17px] mr-[14px] flex items-center gap-1 text-[#d0d0d0]"><svg class="w-[30px] h-[30px]"><path d="M7 7h15l6 6v16H7z" fill="#6e6e6e" stroke="#c4c4c4" stroke-width="2"/><path d="M21 6l8 8h-8z" fill="#c4c4c4"/><path d="M7 0v4M0 6.500h4" stroke="#c4c4c4" stroke-width="2"/></svg><svg class="w-4 h-[10px] mt-2"><use href="#chev"/></svg></button></div>
        </div>
      </div>
    </section>
    <section aria-label="Character" class="border-t-[6px] border-double border-[#383838]">
      <div role="tablist" class="h-[54px] flex bg-[#424242] text-[18px] font-bold text-[#a5a5a5]">
        <button role="tab" class="w-[136px] flex items-center pl-[9px] gap-[12px] bg-[#535353] text-[#f0f0f0]"><svg class="w-[10px] h-4 text-[#a5a5a5]"><use href="#updown"/></svg>Character</button>
        <button role="tab" class="w-[126px] pl-2 border-x-2 border-b-2 border-[#383838]">Paragraph</button>
        <button role="tab" class="w-[120px] pl-2 border-r-2 border-b-2 border-[#383838]">OpenType</button>
        <button aria-label="Panel menu" class="flex-1 border-b-2 border-[#383838] flex items-center justify-end pr-3"><svg class="w-5 h-[15px]"><use href="#burger"/></svg></button>
      </div>
      <div class="pl-[10px] pr-[11px] pt-[11px] pb-[9px] text-white">
        <button class="w-[226px] h-[44px] flex items-center gap-[14px] pl-4 rounded border-2 border-[#757575]"><svg class="w-8 h-8"><path d="M5 4h22v24H5z" fill="none" stroke="#c4c4c4" stroke-width="2"/><g fill="#c4c4c4"><circle cx="4" cy="4" r="4"/><circle cx="28" cy="4" r="4"/><circle cx="4" cy="28" r="4"/><circle cx="28" cy="28" r="4"/><path d="M8 8h16v6h-2l-1-3h-3v11h2v3h-8v-3h2V11h-3l-1 3H8z"/></g></svg>Touch Type Tool</button>
        <div class="mt-[10px] h-[42px] flex rounded border-2 border-[#5f5f5f] bg-[#454545]"><label class="w-[401px] flex items-center gap-[8px] pl-[6px] border-r-2 border-[#5f5f5f]"><svg class="w-[34px] h-6 text-[#b4b4b4]"><use href="#lens"/></svg><input aria-label="Font family" value="Myriad Pro" class="flex-1 min-w-0 bg-transparent"></label><button aria-label="Font list" class="flex-1 flex"><svg class="w-4 h-[10px] m-auto"><use href="#chev"/></svg></button></div>
        <div class="mt-[10px] h-[42px] flex rounded border-2 border-[#5f5f5f] bg-[#454545]"><select aria-label="Font style" class="appearance-none w-[402px] pl-3 pt-1 bg-transparent border-r-2 border-[#5f5f5f]"><option>Regular</option></select><svg class="w-4 h-[10px] m-auto"><use href="#chev"/></svg></div>
        <div class="mt-[11px] pt-[11px] border-t-2 border-[#4b4b4b] grid grid-cols-[42px_164px_28px_42px_163px] gap-y-[10px] items-center">
          <svg class="w-9 h-[30px]" fill="#c4c4c4"><path d="M10 0h26v9h-3l-1-5h-6v22h4v3H17v-3h3V4h-6l-1 5h-3zM0 13h15v5h-2l-1-2H9v11h2v2H4v-2h2V16H3l-1 2H0z"/></svg>
          <div class="h-[42px] flex rounded border-2 border-[#5f5f5f] bg-[#4c4c4c]"><button aria-label="Step size" class="w-[34px] flex flex-col items-center justify-between py-1"><svg class="w-4 h-[10px] rotate-180"><use href="#chev"/></svg><svg class="w-4 h-[10px]"><use href="#chev"/></svg></button><input aria-label="Font size" value="12 pt" class="flex-1 min-w-0 pl-1 bg-[#454545] border-x-2 border-[#5f5f5f]"><button aria-label="Sizes" class="w-[35px] flex"><svg class="w-4 h-[10px] m-auto"><use href="#chev"/></svg></button></div>
          <i></i>
          <svg class="w-[34px] h-9" fill="none" stroke="#c4c4c4" stroke-width="2"><path d="M13 14l7-14 7 14M15 10h10M10 16h24M13 32l7-13 7 13M15 28h10M10 35h24M5 17v16M1 21l4-5 4 5M1 29l4 5 4-5"/></svg>
          <div class="h-[42px] flex rounded border-2 border-[#5f5f5f] bg-[#4c4c4c]"><button aria-label="Step leading" class="w-[34px] flex flex-col items-center justify-between py-1"><svg class="w-4 h-[10px] rotate-180"><use href="#chev"/></svg><svg class="w-4 h-[10px]"><use href="#chev"/></svg></button><input aria-label="Leading" value="(14.4 pt)" class="flex-1 min-w-0 pl-1 bg-[#454545] border-x-2 border-[#5f5f5f]"><button aria-label="Leadings" class="w-[35px] flex"><svg class="w-4 h-[10px] m-auto"><use href="#chev"/></svg></button></div>
          <svg class="w-[34px] h-9" fill="none" stroke="#c4c4c4" stroke-width="2.200"><path d="M1 3l6 19 6-19M21 1L10 28M17 22l7-19 8 19M20 16h10M19 31h14M24 26l-5 5 5 5"/></svg>
          <div class="h-[42px] flex rounded border-2 border-[#5f5f5f] bg-[#4c4c4c]"><button aria-label="Step kerning" class="w-[34px] flex flex-col items-center justify-between py-1"><svg class="w-4 h-[10px] rotate-180"><use href="#chev"/></svg><svg class="w-4 h-[10px]"><use href="#chev"/></svg></button><input aria-label="Kerning" value="Auto" class="flex-1 min-w-0 pl-1 bg-[#454545] border-x-2 border-[#5f5f5f]"><button aria-label="Kernings" class="w-[35px] flex"><svg class="w-4 h-[10px] m-auto"><use href="#chev"/></svg></button></div>
          <i></i>
          <svg class="w-9 h-9"><path d="M0 0h36v23H0z" fill="#c4c4c4"/><path d="M5 3l6 16 7-16M18 20l7-17 7 17M21 15h8" fill="none" stroke="#444" stroke-width="3"/><path d="M1 29h34M6 24l-5 5 5 5M30 24l5 5-5 5" fill="none" stroke="#c4c4c4" stroke-width="2"/></svg>
          <div class="h-[42px] flex rounded border-2 border-[#5f5f5f] bg-[#4c4c4c]"><button aria-label="Step tracking" class="w-[34px] flex flex-col items-center justify-between py-1"><svg class="w-4 h-[10px] rotate-180"><use href="#chev"/></svg><svg class="w-4 h-[10px]"><use href="#chev"/></svg></button><input aria-label="Tracking" value="0" class="flex-1 min-w-0 pl-1 bg-[#454545] border-x-2 border-[#5f5f5f]"><button aria-label="Trackings" class="w-[35px] flex"><svg class="w-4 h-[10px] m-auto"><use href="#chev"/></svg></button></div>
        </div>
      </div>
    </section>
  </div>
</main>

<!-- Windows taskbar -->
<footer class="h-[82px] shrink-0 border-t-2 border-[#2b2b2b] flex bg-[linear-gradient(to_right,#333_0,#363636_1380px,#070707_1490px)] text-white">
  <button aria-label="Start" class="w-[82px] flex items-center pl-[17px]"><svg class="w-[34px] h-8" fill="#fff"><path d="M0 5l14-2v12H0zM16 2.500L33 0v15H16zM0 17h14v12L0 27zM16 17h17v15l-17-2.500z"/></svg></button>
  <label class="w-[688px] flex items-center bg-[#f2f2f2] pl-[18px] pr-[29px] text-[27px] text-[#2b2b2b]"><svg class="w-11 h-11"><circle cx="22" cy="22" r="18.500" fill="#fff" stroke="#888" stroke-width="6"/><circle cx="22" cy="22" r="18" fill="none" stroke="#000" stroke-width="4"/></svg><input aria-label="Type here to search" placeholder="Type here to search" class="ml-[18px] flex-1 min-w-0 bg-transparent placeholder:text-[#2b2b2b]"><svg class="w-6 h-8" fill="none" stroke="#2b2b2b" stroke-width="2"><rect x="6" y="1" width="12" height="20" rx="5"/><path d="M1 14v5q0 6 6 7h10q6-1 6-7v-5M12 26v5M7 31h10"/></svg></label>
  <button aria-label="Task view" class="w-[98px] flex items-center justify-center"><svg class="w-[34px] h-8" fill="none" stroke="#fff" stroke-width="2"><path d="M1 0v4h22V0M1 8h22v16H1zM1 32v-4h22v4M30 0v4M30 17v15"/><path d="M27 8h6v6h-6z" fill="#fff" stroke="none"/></svg></button>
  <button aria-label="Control Panel" class="w-[98px] flex items-center justify-center"><svg class="w-[42px] h-7"><path fill="#2590dc" d="M0 0h42v28H0z"/><path fill="#79cdf7" d="M2 2h38v24H2z"/><circle cx="13" cy="11" r="7" fill="#1a7fd0"/><path d="M13 11V3a8 8 0 0 1 5 14z" fill="#f4b342"/><path d="M26 4h5v4h-5zM33 4h5v4h-5zM26 11h5v4h-5zM33 11h5v4h-5z" fill="none" stroke="#1a7fd0"/><path d="M6 22h15" stroke="#ee8a2a" stroke-width="3"/><path d="M23 22h14" stroke="#1a7fd0" stroke-width="2"/></svg></button>
  <button aria-label="File Explorer" class="relative w-[95px] flex items-center justify-center"><svg class="w-[42px] h-[36px]"><path d="M0 2q0-2 2-2h15l3 3h20v30H0z" fill="#f2bd3d"/><path d="M2 6h40v27H0V8z" fill="#ffe391"/><path d="M7 34V20q0-2 2-2h24q2 0 2 2v14h-8V24H15v10z" fill="#3aafe0"/></svg><i class="absolute inset-x-[9px] bottom-0 h-1 bg-[#a5d3f5]"></i></button>
  <button aria-label="Chrome" class="relative w-[94px] flex items-center justify-center"><svg class="w-11 h-11" viewBox="-22 -22 44 44"><path d="M0 0L-19-11A22 22 0 0 1 19-11z" fill="#e04a3c"/><path d="M0 0L19-11A22 22 0 0 1 0 22z" fill="#fdce42"/><path d="M0 0V22A22 22 0 0 1-19-11z" fill="#1e9e57"/><path d="M0-10H19.500L17 0H0zM0-10" fill="#fdce42"/><path d="M-9 5L-19-11-10-12z" fill="#1e9e57"/><circle r="10" fill="#fff"/><circle r="8" fill="#4686f0"/></svg><i class="absolute left-[9px] w-[60px] bottom-0 h-1 bg-[#a5d3f5]"></i><i class="absolute left-[69px] w-[17px] bottom-0 h-1 bg-[#84a8c3]"></i></button>
  <button aria-label="Brackets" class="w-[95px] flex items-center justify-center"><svg class="w-11 h-11"><rect width="44" height="44" rx="6" fill="url(#blu)"/><rect x="5" y="6" width="34" height="32" rx="4" fill="#fff"/><rect x="8" y="9" width="28" height="26" rx="2" fill="#4a4a4a"/><path d="M20 13h-6v18h6M24 13h6v18h-6" fill="none" stroke="#fff" stroke-width="3"/><path d="M18 17h8v10h-8z" fill="#fff"/></svg></button>
  <button aria-label="FileZilla" class="w-[95px] flex items-center justify-center"><svg class="w-12 h-[46px]"><path fill="#b90000" d="M0 0h48v46H0z"/><path d="M13 8h24l-2 6H19l-1 6h10l-1 5H17l-3 14H7zM24 20h15l-2 4-10 11c5-1 6 3 11 1l-1 4c-6 3-9-2-16 0l1-4 9-11h-8z" fill="#fff"/></svg></button>
  <button aria-label="Inkscape" class="w-[94px] flex items-center justify-center"><svg class="w-[46px] h-[42px]"><path d="M23 5L42 37H4z" fill="none" stroke="#686868" stroke-width="5"/></svg></button>
  <button aria-label="Adobe Illustrator" class="relative ml-[58px] w-[92px] flex items-center justify-center bg-[#393939]"><span class="w-[46px] h-11 mb-1 flex items-center justify-center border-2 border-[#f58a16] bg-[#2a1200] text-[23px] font-semibold text-[#f58a16]">Ai</span><i class="absolute inset-x-0 bottom-0 h-1 bg-[#a5d3f5]"></i></button>
  <div class="flex-1 flex items-center pl-[45px] bg-[#080808]">
    <button aria-label="People"><svg class="w-[30px] h-[30px]" fill="none" stroke="#fff" stroke-width="2"><circle cx="21" cy="6" r="5"/><circle cx="9" cy="15" r="4.500"/><path d="M13 15c2-5 15-5 16 4M1 30c1-12 15-12 16 0"/></svg></button>
    <button aria-label="Hidden icons" class="ml-[51px]"><svg class="w-[27px] h-4"><path d="M1 15L13.500 2 26 15" fill="none" stroke="#fff" stroke-width="2"/></svg></button>
    <button aria-label="Network" class="ml-[40px]"><svg class="w-[26px] h-7" fill="none" stroke="#fff" stroke-width="2"><path d="M1 27C2 12 12 3 25 2M7 27C8 17 14 10 25 9M13 27c1-6 5-10 12-11"/><circle cx="22" cy="24" r="3" fill="#fff" stroke="none"/></svg></button>
    <button aria-label="Windows Ink" class="ml-10"><svg class="w-8 h-8" fill="none" stroke="#fff" stroke-width="2"><path d="M12 26L20 3c1-3 6-2 6 1L17 27l-6 4zM9 18c-8 1-10 8-6 10 4 1 6 0 8-3M23 15c6-4 9-1 7 2-2 2-4 3-8 4M19 6l6 2"/></svg></button>
    <time class="ml-[33px] w-[116px] text-center text-[22px] leading-[37px]">8:45 PM<br>5/14/2019</time>
    <button aria-label="Notifications" class="relative ml-[34px] mt-2"><svg class="w-[46px] h-[48px]"><path d="M0 0h32v26H20l-6 7v-7H0z" fill="#fff"/><path d="M5 6h22M5 12h22M5 18h16" stroke="#111" stroke-width="2"/><circle cx="30" cy="31" r="15.500" fill="#484848" stroke="#999"/></svg><span class="absolute left-6 top-[18px] text-[21px]">5</span></button>
  </div>
</footer>
</body>
</html>
